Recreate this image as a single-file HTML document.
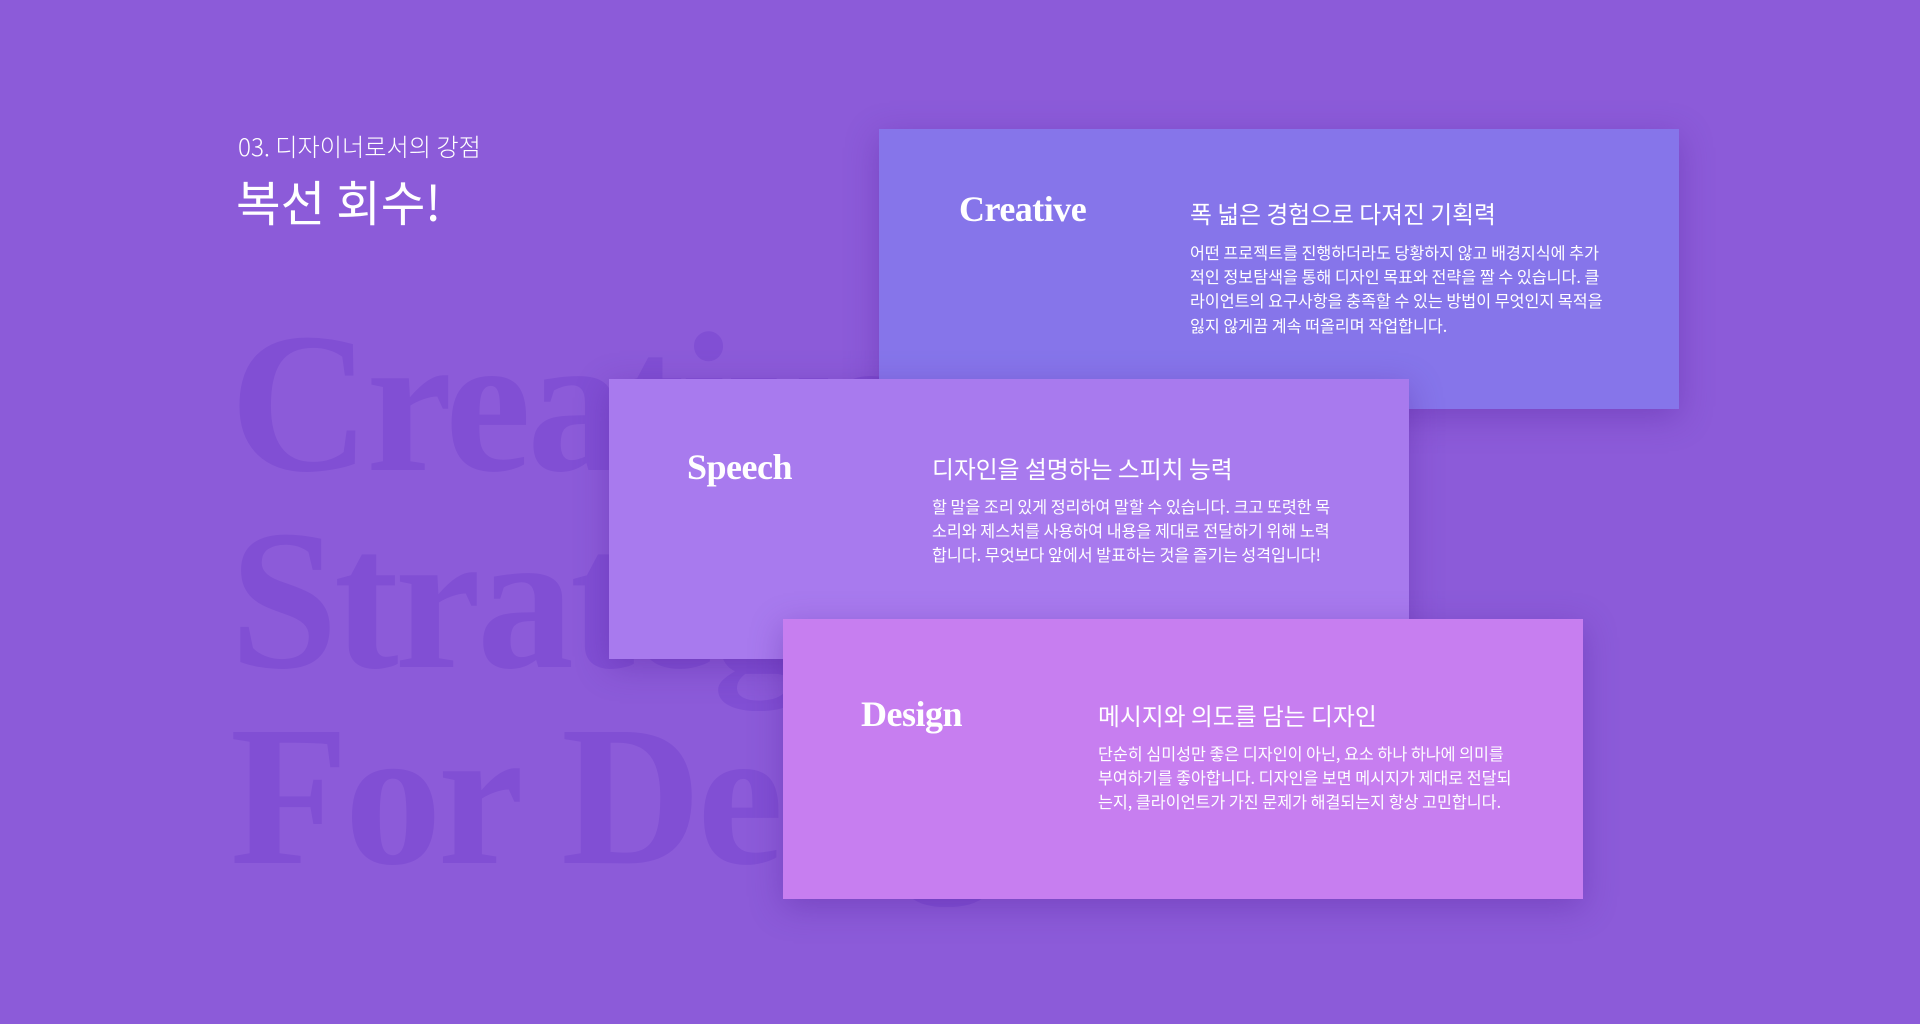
<!DOCTYPE html>
<html><head><meta charset="utf-8"><style>
*{margin:0;padding:0;box-sizing:border-box}
html,body{width:1920px;height:1024px;overflow:hidden}
body{background:#8c5bd9;position:relative;font-family:"Noto Sans CJK KR","Liberation Sans",sans-serif;color:#fff}
.abs{position:absolute;white-space:nowrap}
.big{position:absolute;left:230px;font-family:"Liberation Serif","DejaVu Serif",serif;font-weight:bold;font-size:200px;color:#814fd4;line-height:1;letter-spacing:-4px;transform:scaleX(0.97);transform-origin:left}
.card{position:absolute;width:800px;height:280px;box-shadow:0 8px 30px rgba(80,30,150,.35)}
.lab{position:absolute;font-family:"Liberation Serif",serif;font-weight:bold;font-size:36px;letter-spacing:-0.5px;line-height:40px;white-space:nowrap}
.h{position:absolute;font-size:23.8px;line-height:30px;white-space:nowrap;font-weight:400}
.p{position:absolute;font-size:16.2px;line-height:24.2px;width:414px;font-weight:400;word-break:break-all}
</style></head><body>
<div class="abs" style="left:238px;top:131px;font-size:24.2px;line-height:30px;font-weight:300">03. 디자이너로서의 강점</div>
<div class="abs" style="left:236px;top:171px;font-size:48.5px;line-height:58px">복선 회수!</div>
<div class="big" style="top:304px">Creative</div>
<div class="big" style="top:501px">Strategy</div>
<div class="big" style="top:697px">For Design</div>

<div class="card" style="left:879px;top:129px;background:#8675ea">
<div class="lab" style="left:80px;top:60px">Creative</div>
<div class="h" style="left:311px;top:69px">폭 넓은 경험으로 다져진 기획력</div>
<div class="p" style="left:311px;top:111px">어떤 프로젝트를 진행하더라도 당황하지 않고 배경지식에 추가적인 정보탐색을 통해 디자인 목표와 전략을 짤 수 있습니다. 클라이언트의 요구사항을 충족할 수 있는 방법이 무엇인지 목적을 잃지 않게끔 계속 떠올리며 작업합니다.</div>
</div>
<div class="card" style="left:609px;top:379px;background:#a87aee">
<div class="lab" style="left:78px;top:68px">Speech</div>
<div class="h" style="left:323px;top:74px">디자인을 설명하는 스피치 능력</div>
<div class="p" style="left:323px;top:115px;width:404px">할 말을 조리 있게 정리하여 말할 수 있습니다. 크고 또렷한 목소리와 제스처를 사용하여 내용을 제대로 전달하기 위해 노력합니다. 무엇보다 앞에서 발표하는 것을 즐기는 성격입니다!</div>
</div>
<div class="card" style="left:783px;top:619px;background:#c77ef0">
<div class="lab" style="left:78px;top:75px">Design</div>
<div class="h" style="left:315px;top:81px">메시지와 의도를 담는 디자인</div>
<div class="p" style="left:315px;top:122px">단순히 심미성만 좋은 디자인이 아닌, 요소 하나 하나에 의미를 부여하기를 좋아합니다. 디자인을 보면 메시지가 제대로 전달되는지, 클라이언트가 가진 문제가 해결되는지 항상 고민합니다.</div>
</div>
</body></html>
